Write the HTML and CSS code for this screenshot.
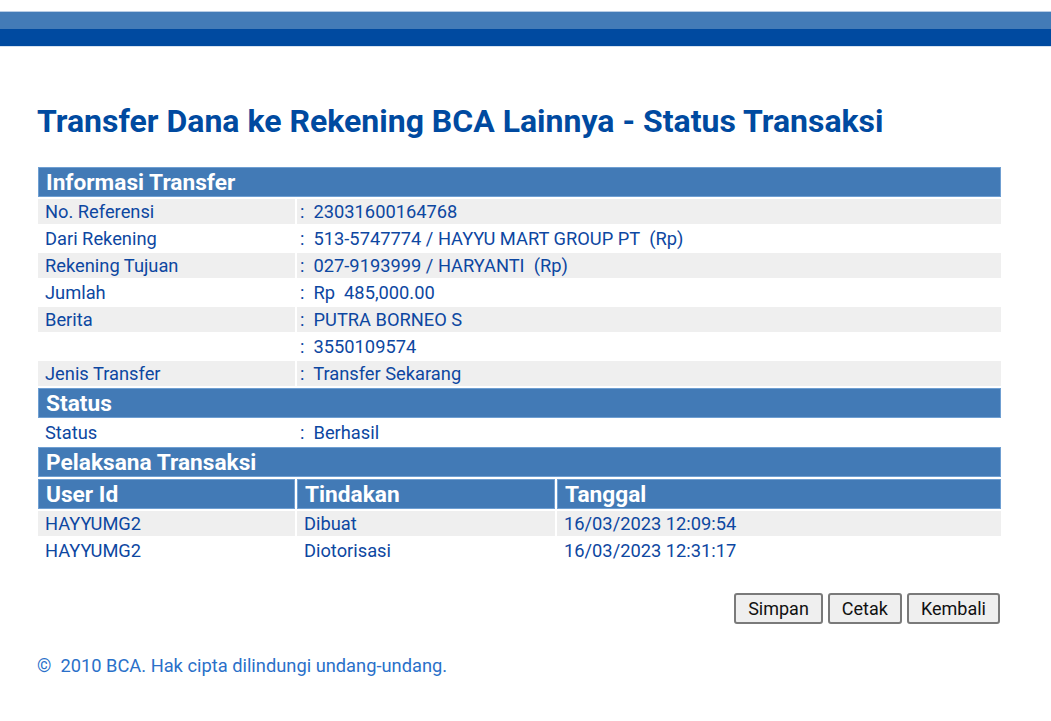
FILE: index.html
```html
<!DOCTYPE html>
<html lang="en">
<head>
    <meta charset="UTF-8">
    <title>Transfer Dana ke Rekening BCA Lainnya - Status Transaksi</title>
    <link rel="stylesheet" href="styles.css">
</head>
<body>
    <div class="topbar">
        <div class="band-light"></div>
        <div class="band-dark"></div>
    </div>

    <div class="content">
        <h1 class="page-title">Transfer Dana ke Rekening BCA Lainnya - Status Transaksi</h1>

        <table class="info-table">
            <colgroup>
                <col class="col-a">
                <col class="col-b">
                <col>
            </colgroup>
            <tr><td class="section" colspan="3">Informasi Transfer</td></tr>
            <tr class="odd"><td>No. Referensi</td><td class="value" colspan="2">:&nbsp; 23031600164768</td></tr>
            <tr><td>Dari Rekening</td><td class="value" colspan="2">:&nbsp; 513-5747774 / HAYYU MART GROUP PT&nbsp; (Rp)</td></tr>
            <tr class="odd"><td>Rekening Tujuan</td><td class="value" colspan="2">:&nbsp; 027-9193999 / HARYANTI&nbsp; (Rp)</td></tr>
            <tr><td>Jumlah</td><td class="value" colspan="2">:&nbsp; Rp&nbsp; 485,000.00</td></tr>
            <tr class="odd"><td>Berita</td><td class="value" colspan="2">:&nbsp; PUTRA BORNEO S</td></tr>
            <tr><td></td><td class="value" colspan="2">:&nbsp; 3550109574</td></tr>
            <tr class="odd"><td>Jenis Transfer</td><td class="value" colspan="2">:&nbsp; Transfer Sekarang</td></tr>

            <tr><td class="section" colspan="3">Status</td></tr>
            <tr><td>Status</td><td class="value" colspan="2">:&nbsp; Berhasil</td></tr>

            <tr><td class="section" colspan="3">Pelaksana Transaksi</td></tr>
            <tr>
                <td class="section">User Id</td>
                <td class="section">Tindakan</td>
                <td class="section">Tanggal</td>
            </tr>
            <tr class="odd"><td>HAYYUMG2</td><td>Dibuat</td><td>16/03/2023 12:09:54</td></tr>
            <tr><td>HAYYUMG2</td><td>Diotorisasi</td><td>16/03/2023 12:31:17</td></tr>
        </table>

        <div class="actions">
            <button class="btn">Simpan</button>
            <button class="btn">Cetak</button>
            <button class="btn">Kembali</button>
        </div>

        <p class="copyright">&copy;&nbsp; 2010 BCA. Hak cipta dilindungi undang-undang.</p>
    </div>
</body>
</html>
```

FILE: styles.css
```css
:root {
    --blue-band: #437bb7;
    --blue-dark: #004aa0;
    --section-bg: #427ab6;
    --section-border: #6f9fd2;
    --row-grey: #efefef;
    --text-blue: #0d47a1;
    --footer-blue: #2a70c9;
}

* {
    margin: 0;
    padding: 0;
    box-sizing: border-box;
}

body {
    font-family: Roboto, "Liberation Sans", sans-serif;
    background-color: #fff;
}

.topbar {
    margin-top: 11px;
    border-top: 1px solid #b9cde5;
    border-bottom: 1px solid #d6e2f0;
}

.band-light {
    height: 17px;
    background-color: var(--blue-band);
}

.band-dark {
    height: 17px;
    background-color: var(--blue-dark);
}

.content {
    padding: 55px 50px 0 37px;
}

.page-title {
    font-size: 32px;
    font-weight: 700;
    color: var(--blue-dark);
    margin-bottom: 25px;
}

/* table sits 1px left so the 2px cell spacing lines up with x=38 */
.info-table {
    width: 967px;
    margin-left: -1px;
    border-collapse: separate;
    border-spacing: 2px;
    table-layout: fixed;
    font-size: 18.3px;
    color: var(--text-blue);
}

.col-a { width: 257px; }
.col-b { width: 258px; }

.info-table td {
    height: 25px;
    padding: 0 6px 0 7px;
    white-space: nowrap;
    vertical-align: middle;
}

.info-table td.value {
    padding-left: 3px;
}

.info-table tr.odd td {
    background-color: var(--row-grey);
}

.info-table td.section {
    height: 30px;
    background-color: var(--section-bg);
    border: 1px solid var(--section-border);
    color: #fff;
    font-size: 22.7px;
    font-weight: 700;
    padding: 0 7px;
}

.actions {
    display: flex;
    justify-content: flex-end;
    gap: 5px;
    width: 963px;
    margin-top: 28px;
}

.btn {
    font-family: inherit;
    font-size: 18px;
    color: #111;
    background-color: #efefef;
    border: 2px solid #7a7a7a;
    border-radius: 3px;
    height: 31px;
    padding: 0 12px;
}

.copyright {
    margin-top: 31px;
    font-size: 18.3px;
    color: var(--footer-blue);
}
```
